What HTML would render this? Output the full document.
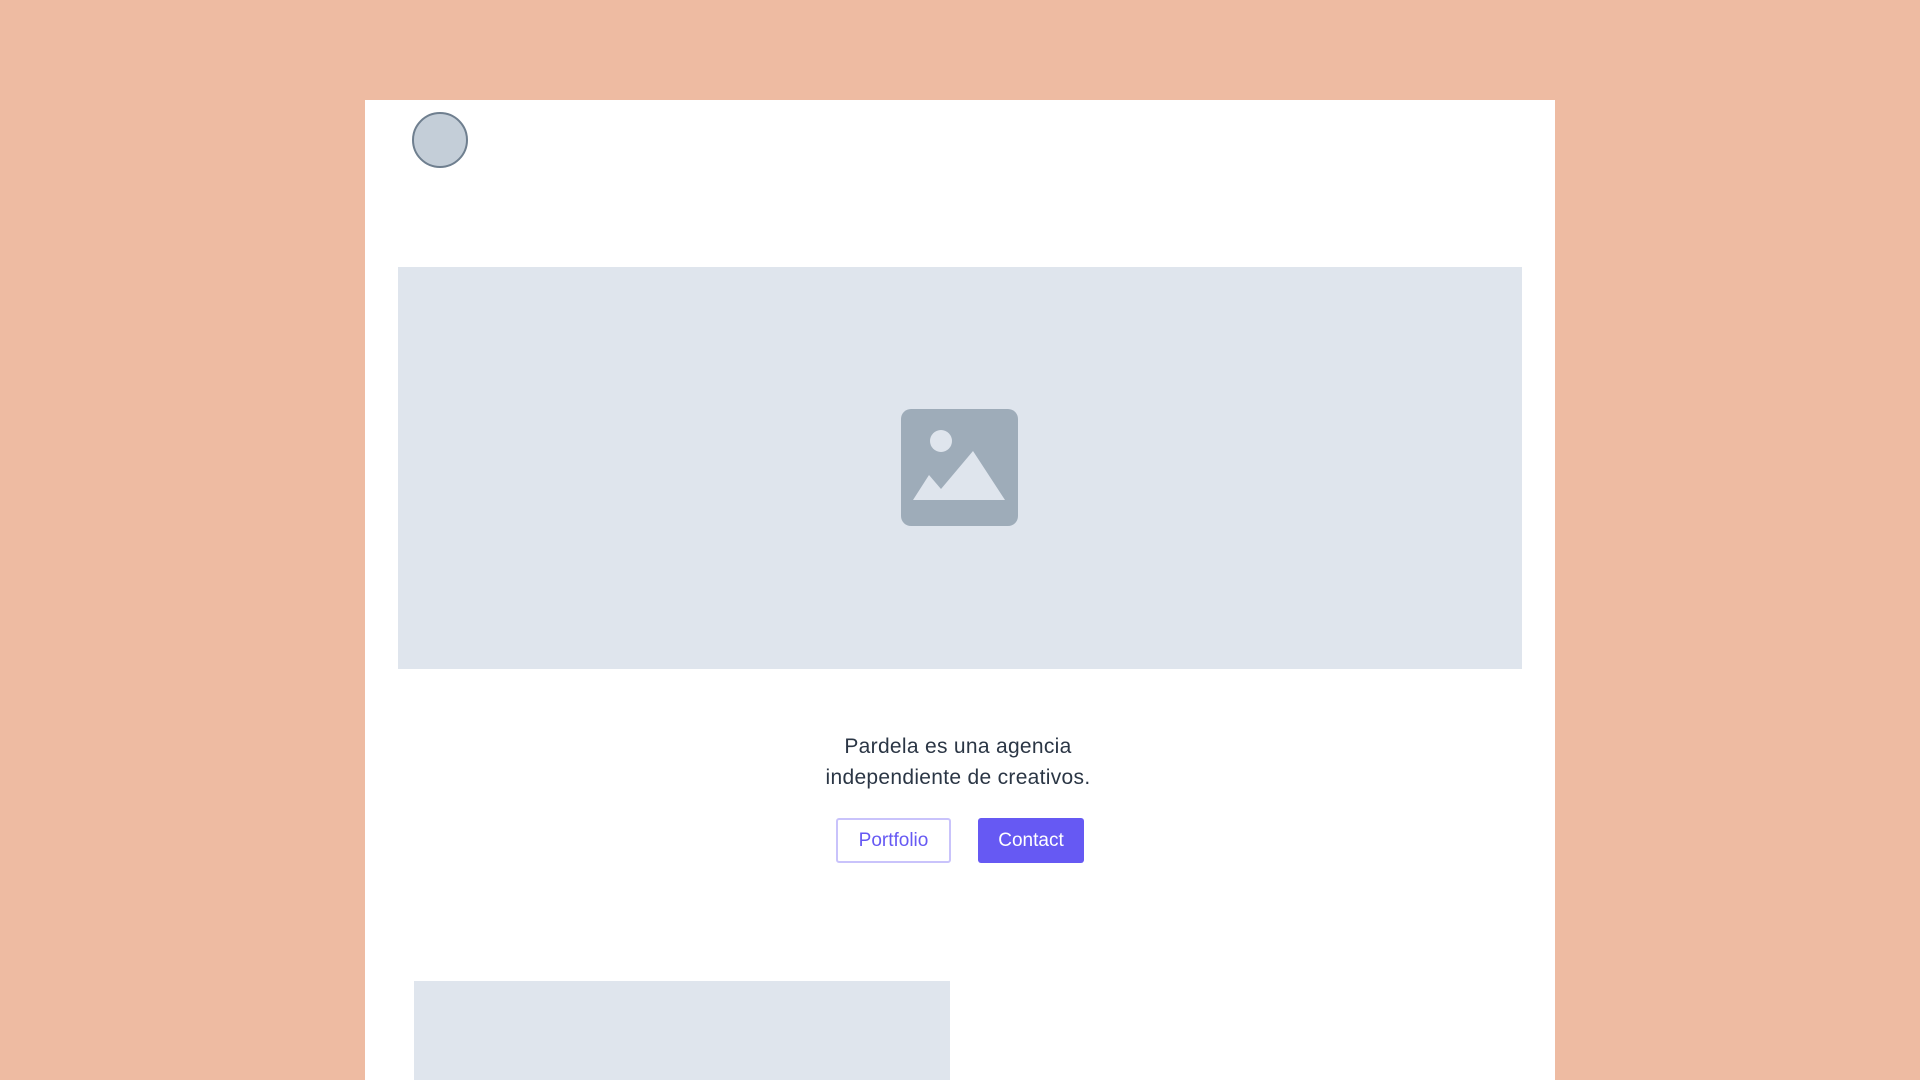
<!DOCTYPE html>
<html><head><meta charset="utf-8"><style>
html,body{margin:0;padding:0;width:1920px;height:1080px;overflow:hidden;background:#eebba2;font-family:"Liberation Sans",sans-serif}
.panel{position:absolute;left:365px;top:100px;width:1190px;height:980px;background:#fff}
.circle{position:absolute;left:412px;top:112px;width:52px;height:52px;border-radius:50%;background:#c4ced8;border:2px solid #6f7f8f}
.hero{position:absolute;left:398px;top:267px;width:1124px;height:402px;background:#dfe5ed}
.icon{position:absolute;left:901px;top:409px;width:117px;height:117px}
.text{position:absolute;left:700px;width:516px;top:731px;text-align:center;color:#2b3645;font-size:21px;line-height:31px;letter-spacing:0.3px}
.btn{position:absolute;top:818px;height:45px;box-sizing:border-box;border-radius:3px;font-size:19px;line-height:45px;text-align:center}
.b1{left:836px;width:115px;border:2px solid #c9c3fb;color:#6659f3;line-height:41px}
.b2{left:978px;width:106px;background:#6659f3;color:#fff}
.block{position:absolute;left:414px;top:981px;width:536px;height:99px;background:#dfe5ed}
</style></head><body>
<div class="panel"></div>
<div class="circle"></div>
<div class="hero"></div>
<svg class="icon" viewBox="0 0 117 117"><rect width="117" height="117" rx="10" fill="#9eacb9"/><circle cx="40" cy="32" r="11" fill="#dfe5ed"/><path d="M12 91 L28 66 L40 80 L72 42 L104 91 Z" fill="#dfe5ed"/></svg>
<div class="text">Pardela es una agencia<br>independiente de creativos.</div>
<div class="btn b1">Portfolio</div>
<div class="btn b2">Contact</div>
<div class="block"></div>
</body></html>
